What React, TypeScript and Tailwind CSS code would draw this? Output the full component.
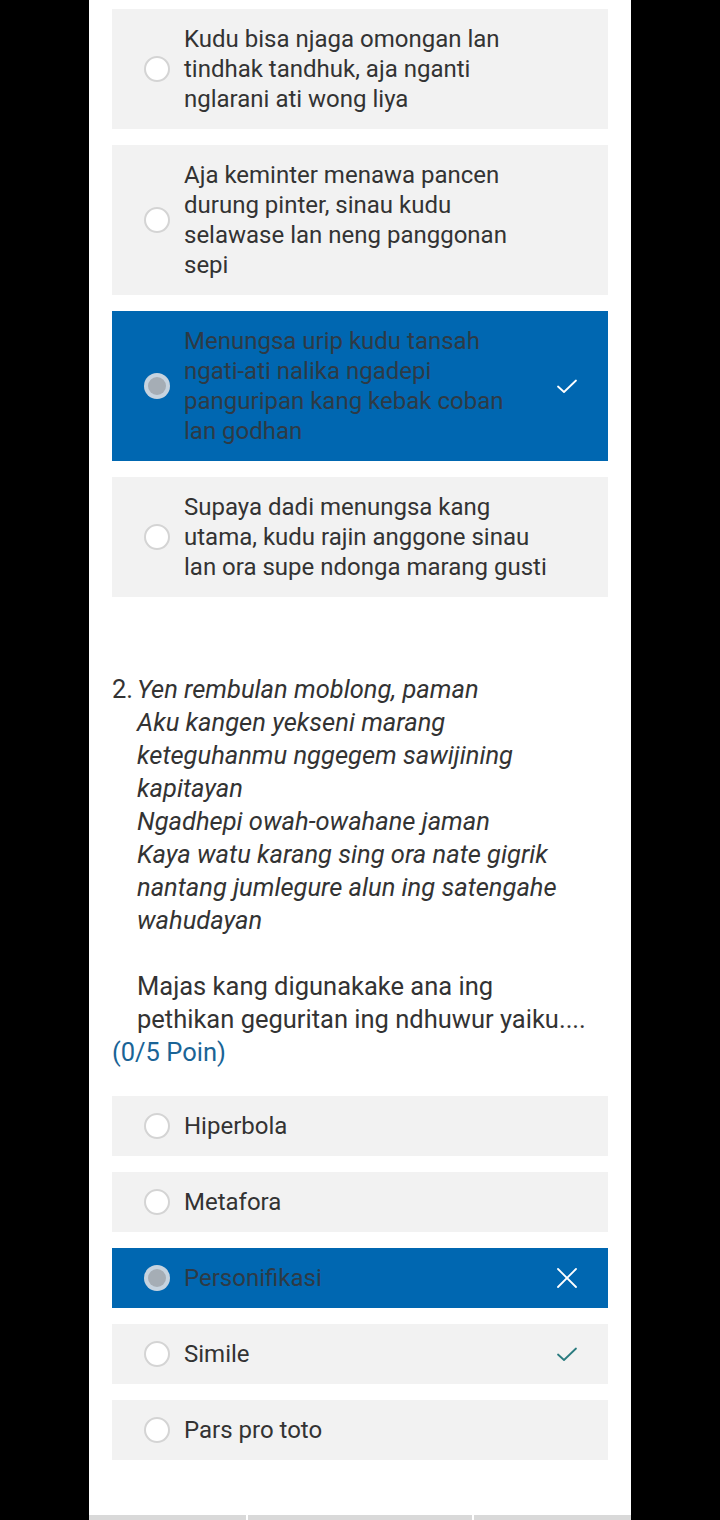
import React from 'react';

type Mark = 'none' | 'check' | 'cross' | 'checkDark';

interface OptionProps {
  text: React.ReactNode;
  selected?: boolean;
  mark?: Mark;
}

const CheckIcon: React.FC<{ color: string }> = ({ color }) => (
  <svg width="24" height="24" viewBox="0 0 24 24" fill="none">
    <path d="M3 12.5 L9 18 L21 6.5" stroke={color} strokeWidth="1.8" strokeLinecap="round" strokeLinejoin="round" />
  </svg>
);

const CrossIcon = () => (
  <svg width="24" height="24" viewBox="0 0 24 24" fill="none">
    <path d="M3 3 L21 21 M21 3 L3 21" stroke="#ffffff" strokeWidth="1.8" strokeLinecap="round" />
  </svg>
);

const Option: React.FC<OptionProps> = ({ text, selected = false, mark = 'none' }) => {
  return (
    <div
      className={`flex items-center pl-8 pr-[29px] py-[15px] ${
        selected ? 'bg-[#0067b1]' : 'bg-[#f2f2f2]'
      }`}
    >
      {selected ? (
        <div className="w-[26px] h-[26px] rounded-full bg-[#c6d3df] flex items-center justify-center shrink-0">
          <div className="w-[18px] h-[18px] rounded-full bg-[#a5adb5]" />
        </div>
      ) : (
        <div className="w-[26px] h-[26px] rounded-full border-2 border-[#d4d4d4] bg-white shrink-0" />
      )}
      <div
        className={`ml-[14px] w-[365px] text-[24px] leading-[30px] ${
          selected ? 'text-[#2e3a45]' : 'text-[#333333]'
        }`}
      >
        {text}
      </div>
      <div className="flex-1" />
      <div className="w-6 h-6 shrink-0 flex items-center justify-center">
        {mark === 'check' && <CheckIcon color="#ffffff" />}
        {mark === 'checkDark' && <CheckIcon color="#2a7b7f" />}
        {mark === 'cross' && <CrossIcon />}
      </div>
    </div>
  );
};

export default function App() {
  return (
    <div className="bg-black min-h-[1520px] flex justify-center" style={{ fontFamily: 'Roboto, "Noto Sans", sans-serif' }}>
      <div className="w-[542px] bg-white relative flex flex-col">
        <div className="px-[23px] pt-[9px] flex flex-col gap-4">
          <Option text="Kudu bisa njaga omongan lan tindhak tandhuk, aja nganti nglarani ati wong liya" />
          <Option text="Aja keminter menawa pancen durung pinter, sinau kudu selawase lan neng panggonan sepi" />
          <Option
            text={
              <>
                <div>Menungsa urip kudu tansah</div>
                <div>ngati-ati nalika ngadepi</div>
                <div>panguripan kang kebak coban</div>
                <div>lan godhan</div>
              </>
            }
            selected
            mark="check"
          />
          <Option text="Supaya dadi menungsa kang utama, kudu rajin anggone sinau lan ora supe ndonga marang gusti" />
        </div>

        <div className="px-[23px] mt-[76px] text-[25.5px] leading-[33px] text-[#333333]">
          <div className="flex">
            <span className="w-[25px] shrink-0">2.</span>
            <div className="w-[456px]">
              <div className="italic">
                <div>Yen rembulan moblong, paman</div>
                <div>Aku kangen yekseni marang keteguhanmu nggegem sawijining kapitayan</div>
                <div>Ngadhepi owah-owahane jaman</div>
                <div>Kaya watu karang sing ora nate gigrik nantang jumlegure alun ing satengahe wahudayan</div>
              </div>
              <div className="h-[33px]" />
              <div>Majas kang digunakake ana ing pethikan geguritan ing ndhuwur yaiku....</div>
            </div>
          </div>
          <div className="text-[#1a6496]">(0/5 Poin)</div>
        </div>

        <div className="px-[23px] mt-[27px] flex flex-col gap-4">
          <Option text="Hiperbola" />
          <Option text="Metafora" />
          <Option text="Personifikasi" selected mark="cross" />
          <Option text="Simile" mark="checkDark" />
          <Option text="Pars pro toto" />
        </div>

        <div className="flex-1" />
        <div className="flex gap-[2px] h-[5px]">
          <div className="w-[157px] bg-[#d9d9d9]" />
          <div className="w-[224px] bg-[#d9d9d9]" />
          <div className="flex-1 bg-[#d9d9d9]" />
        </div>
      </div>
    </div>
  );
}
